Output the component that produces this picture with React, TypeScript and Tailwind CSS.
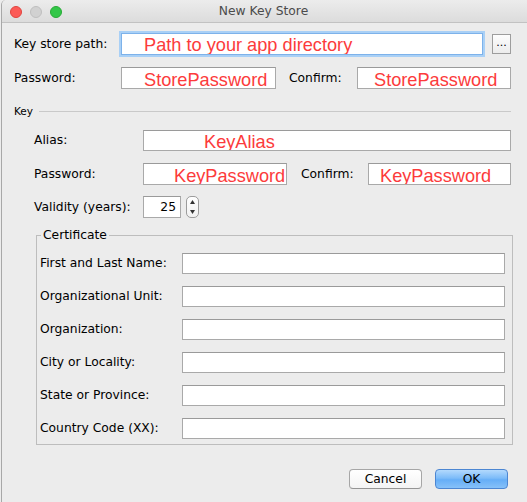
import React from "react";

const lbl = "text-[12.3px] leading-[15px] text-black font-['DejaVu_Sans',sans-serif] whitespace-nowrap";
const red = "text-[18.2px] leading-[18px] text-[#fc3b3b] font-['Liberation_Sans',Arial,sans-serif] whitespace-nowrap";
const box = "bg-white border border-[#a9a9a9] border-t-[#9a9a9a] flex items-center overflow-hidden";

function Stepper() {
  return (
    <div className="ml-[5px] w-[13px] h-[22px] rounded-[5px] border border-[#9c9c9c] bg-[linear-gradient(to_bottom,#ffffff,#f1f1f1)] flex items-center justify-center">
      <svg width="11" height="20" viewBox="0 0 11 20">
        <path d="M5.5 3 L8 7 L3 7 Z" fill="#333" />
        <path d="M5.5 17 L8 13 L3 13 Z" fill="#333" />
      </svg>
    </div>
  );
}

function CertRow({ label, first }: { label: string; first?: boolean }) {
  return (
    <div className={first ? "flex items-center h-[21px]" : "flex items-center h-[21px] mt-[12px]"}>
      <div className={lbl + " w-[142px]"}>{label}</div>
      <div className={box + " w-[323px] h-[21px]"} />
    </div>
  );
}

export default function App() {
  return (
    <div className="w-[527px] h-[502px] overflow-hidden bg-[#ececec]">
      <div className="ml-[1px] h-full border-l border-[#a8a8a8] rounded-tl-[5px] flex flex-col bg-[#ececec]">
        {/* Title bar */}
        <div className="relative h-[23px] shrink-0 border-b border-[#c2c2c2] rounded-tl-[5px] bg-[linear-gradient(to_bottom,#ececec,#dcdcdc)] flex items-center">
          <div className="flex items-center gap-[8px] pl-[8px] pt-[1px]">
            <div className="w-[12px] h-[12px] rounded-full bg-[#fc5b57] border border-[#e0443e]" />
            <div className="w-[12px] h-[12px] rounded-full bg-[#d1d1d1] border border-[#bfbfbf]" />
            <div className="w-[12px] h-[12px] rounded-full bg-[#33c748] border border-[#27aa35]" />
          </div>
          <div className="absolute inset-0 flex items-center justify-center pr-[2px] pt-[1px]">
            <span className="text-[12.3px] text-[#4b4b4b] font-['DejaVu_Sans',sans-serif]">New Key Store</span>
          </div>
        </div>

        {/* Body */}
        <div className="flex flex-col pl-[12px] pr-[16px] pt-[10px]">
          {/* Key store path */}
          <div className="flex items-center h-[22px]">
            <div className={lbl + " w-[107px]"}>Key store path:</div>
            <div className={"w-[362px] h-[22px] bg-white border border-[#7db2ea] shadow-[0_0_0_2px_#a9d0f6] flex items-center overflow-hidden"}>
              <span className={red + " pl-[22px] pt-[2px]"}>Path to your app directory</span>
            </div>
            <div className="ml-[9px] w-[19px] h-[20px] border border-[#9d9d9d] bg-[linear-gradient(to_bottom,#fdfdfd,#ececec)] flex items-center justify-center">
              <span className="text-[11px] leading-[11px] text-black font-['DejaVu_Sans',sans-serif] pb-[3px]">...</span>
            </div>
          </div>

          {/* Store password */}
          <div className="flex items-center h-[22px] mt-[12px]">
            <div className={lbl + " w-[107px]"}>Password:</div>
            <div className={box + " w-[155px] h-[22px]"}>
              <span className={red + " pl-[22px] pt-[3px]"}>StorePassword</span>
            </div>
            <div className={lbl + " ml-[13px] w-[68px]"}>Confirm:</div>
            <div className={box + " w-[154px] h-[22px]"}>
              <span className={red + " pl-[16px] pt-[3px]"}>StorePassword</span>
            </div>
          </div>

          {/* Key separator */}
          <div className="flex items-center h-[14px] mt-[15px]">
            <span className="text-[10.5px] leading-[12px] text-black font-['DejaVu_Sans',sans-serif]">Key</span>
            <div className="flex-1 h-px bg-[#c9c9c9] ml-[6px]" />
          </div>

          {/* Alias */}
          <div className="flex items-center h-[21px] mt-[12px] pl-[20px]">
            <div className={lbl + " w-[109px]"}>Alias:</div>
            <div className={box + " w-[368px] h-[21px]"}>
              <span className={red + " pl-[60px] pt-[2px]"}>KeyAlias</span>
            </div>
          </div>

          {/* Key password */}
          <div className="flex items-center h-[22px] mt-[12px] pl-[20px]">
            <div className={lbl + " w-[109px]"}>Password:</div>
            <div className={box + " w-[144px] h-[22px]"}>
              <span className={red + " pl-[30px] pt-[3px]"}>KeyPassword</span>
            </div>
            <div className={lbl + " ml-[14px] w-[67px]"}>Confirm:</div>
            <div className={box + " w-[143px] h-[22px]"}>
              <span className={red + " pl-[11px] pt-[3px]"}>KeyPassword</span>
            </div>
          </div>

          {/* Validity */}
          <div className="flex items-center h-[22px] mt-[11px] pl-[20px]">
            <div className={lbl + " w-[109px]"}>Validity (years):</div>
            <div className={box + " w-[38px] h-[22px] justify-end pr-[4px]"}>
              <span className={lbl}>25</span>
            </div>
            <Stepper />
          </div>

          {/* Certificate */}
          <fieldset className="mt-[10px] ml-[22px] w-[477px] border border-[#bdbdbd] pl-[3px] pt-[10px] pb-[5px]">
            <legend className={lbl + " leading-[14px] ml-[1px] px-[2px]"}>Certificate</legend>
            <CertRow label="First and Last Name:" first />
            <CertRow label="Organizational Unit:" />
            <CertRow label="Organization:" />
            <CertRow label="City or Locality:" />
            <CertRow label="State or Province:" />
            <CertRow label="Country Code (XX):" />
          </fieldset>

          {/* Buttons */}
          <div className="flex justify-end mt-[24px] mr-[3px] gap-[13px]">
            <div className="w-[73px] h-[20px] rounded-[4px] border border-[#a6a6a6] border-b-[#959595] bg-[linear-gradient(to_bottom,#ffffff,#f4f4f4)] flex items-center justify-center">
              <span className="text-[12.3px] leading-[14px] text-black font-['DejaVu_Sans',sans-serif]">Cancel</span>
            </div>
            <div className="w-[73px] h-[20px] rounded-[4px] border border-[#4c86d2] bg-[linear-gradient(to_bottom,#b3d9fd,#7dbcf9_45%,#66aef7_55%,#86c1f9)] flex items-center justify-center">
              <span className="text-[12.3px] leading-[14px] text-black font-['DejaVu_Sans',sans-serif]">OK</span>
            </div>
          </div>
        </div>
      </div>
    </div>
  );
}
